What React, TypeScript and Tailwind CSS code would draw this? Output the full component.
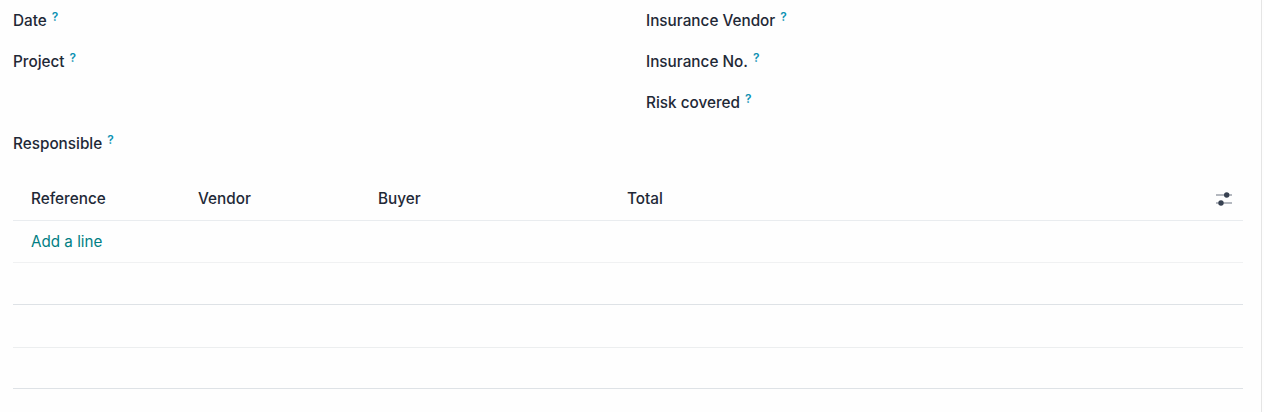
const Field = ({ label }: { label: string }) => (
  <div className="h-[41px] flex items-center text-[15.3px] font-medium text-[#1f2937]">
    <span>{label}</span>
    <sup className="ml-[5px] -mt-[9px] top-0 text-[12px] font-semibold leading-none text-[#0e92b3]">?</sup>
  </div>
);

const Line = ({ color, h }: { color: string; h: string }) => <div className={`${h} border-b ${color}`} />;

export default function App() {
  return (
    <div className="relative w-[1264px] h-[412px] overflow-hidden bg-[#fefefe] font-['Inter',sans-serif]">
      <div className="pt-px pl-[13px] pr-[21px]">
        <div className="grid grid-cols-[633px_1fr]">
          <div>
            <Field label="Date" />
            <Field label="Project" />
            <div className="h-[41px]" />
            <Field label="Responsible" />
          </div>
          <div>
            <Field label="Insurance Vendor" />
            <Field label="Insurance No." />
            <Field label="Risk covered" />
          </div>
        </div>
        <div className="mt-[13px] h-[43px] flex items-center border-b border-[#e9ecef] text-[15.3px] font-medium text-[#1f2937]">
          <div className="w-[185px] pl-[18px]">Reference</div>
          <div className="w-[180px]">Vendor</div>
          <div className="w-[249px]">Buyer</div>
          <div className="flex-1">Total</div>
          <svg className="mr-[11px]" width="16" height="14" viewBox="0 0 16 14" fill="none">
            <path d="M0 3h16M0 11h16" stroke="#6b7280" strokeWidth="1.2" />
            <circle cx="10.7" cy="3" r="2.7" fill="#374151" />
            <circle cx="5" cy="11" r="2.7" fill="#374151" />
          </svg>
        </div>
        <div className="h-[42px] flex items-center pt-[2px] pl-[18px] border-b border-[#f0f1f2] text-[15.2px] text-[#017e84]">Add a line</div>
        <Line h="h-[42px]" color="border-[#dee2e6]" />
        <Line h="h-[43px]" color="border-[#eceeef]" />
        <Line h="h-[41px]" color="border-[#dee2e6]" />
      </div>
      <div className="absolute top-0 right-[2px] bottom-0 w-px bg-[#e5e5e5]" />
    </div>
  );
}
